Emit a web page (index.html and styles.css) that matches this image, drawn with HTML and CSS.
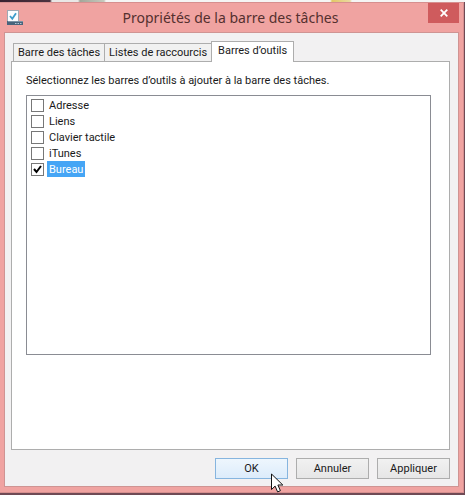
FILE: index.html
```html
<!DOCTYPE html>
<html lang="fr">

<head>
    <meta charset="UTF-8">
    <meta name="viewport" content="width=device-width, initial-scale=1.0">
    <title>Propriétés de la barre des tâches</title>
    <link rel="stylesheet" href="styles.css">
</head>

<body>

    <div class="window">
        <header class="title-bar">
            <svg class="app-icon" width="16" height="16" viewBox="0 0 16 16" aria-hidden="true">
                <rect x="0.5" y="0.5" width="11" height="11" fill="#fbfdff" stroke="#9fa9b4" />
                <path d="M3 6l2.300 2.800L9 3.200" fill="none" stroke="#3d9ccb" stroke-width="1.800" />
                <rect x="0" y="11" width="16" height="4" fill="#48647c" />
                <path d="M1 11.500h15" stroke="#7d93a5" />
                <path d="M8 13.500h1.500M10.500 13.500H12M13 13.500h1.500" stroke="#b5c8d6" />
            </svg>
            <h1>Propriétés de la barre des tâches</h1>
            <button type="button" class="close-btn" aria-label="Fermer">
                <svg width="8" height="8" viewBox="0 0 8 8" aria-hidden="true">
                    <path d="M0.700 0.700l6.600 6.600M7.300 0.700L0.700 7.300" stroke="#fff" stroke-width="1.800" />
                </svg>
            </button>
        </header>

        <form class="dialog">
            <div class="tabs" role="tablist">
                <button type="button" class="tab" role="tab" aria-selected="false">Barre des tâches</button>
                <button type="button" class="tab" role="tab" aria-selected="false">Listes de raccourcis</button>
                <button type="button" class="tab active" role="tab" aria-selected="true">Barres d’outils</button>
            </div>

            <div class="panel" role="tabpanel">
                <p id="toolbars-label">Sélectionnez les barres d’outils à ajouter à la barre des tâches.</p>
                <ul class="toolbar-list" aria-labelledby="toolbars-label">
                    <li><label><input type="checkbox"><span>Adresse</span></label></li>
                    <li><label><input type="checkbox"><span>Liens</span></label></li>
                    <li><label><input type="checkbox"><span>Clavier tactile</span></label></li>
                    <li><label><input type="checkbox"><span>iTunes</span></label></li>
                    <li><label><input type="checkbox" checked><span class="selected">Bureau</span></label></li>
                </ul>
            </div>

            <div class="actions">
                <button type="button" class="btn hovered">OK
                    <svg class="cursor" width="13" height="20" viewBox="0 0 13 20" aria-hidden="true">
                        <path d="M0.500 1v15.500l3.600-3.400 2.500 5.800 2.800-1.200-2.500-5.700h4.900z" fill="#fff" stroke="#111" />
                    </svg>
                </button>
                <button type="button" class="btn">Annuler</button>
                <button type="button" class="btn">Appliquer</button>
            </div>
        </form>
    </div>

</body>

</html>
```

FILE: styles.css
```css
* {
    box-sizing: border-box;
}

body {
    display: flex;
    height: 100vh;
    margin: 0;
    padding: 2px 1px 2px 0;
    background: linear-gradient(90deg, #3a2230 0, #4b3340 50px, #e9e7e6 52px, #e9e7e6 78px, #a3a79a 80px, #c5c9bd 104px, #f5f5f5 106px, #f5f5f5 330px, #e3c766 332px, #ead9a0 350px, #f5f5f5 352px) top / 100% 2px no-repeat, #6f4a55;
    font-family: Roboto, "Noto Sans", sans-serif;
    font-size: 11px;
    color: #1a1a1a;
}

button {
    font: inherit;
    color: inherit;
}

.window {
    flex: 1;
    display: flex;
    flex-direction: column;
    padding: 0 4px 5px;
    background-color: #f0a3a1;
    border: 1px solid #d68f8f;
    border-left: none;
}

.title-bar {
    display: flex;
    align-items: flex-start;
    height: 29px;
}

.app-icon {
    margin: 7px 0 0 3px;
}

.title-bar h1 {
    flex: 1;
    margin: 4px 0 0 10px;
    font-family: "Noto Sans", "Open Sans", sans-serif;
    font-size: 14px;
    font-weight: normal;
    line-height: 22px;
    text-align: center;
    color: #54302f;
}

.close-btn {
    display: flex;
    align-items: center;
    justify-content: center;
    width: 31px;
    height: 20px;
    padding: 0;
    background-color: #cf5b5d;
    border: none;
}

.dialog {
    flex: 1;
    display: flex;
    flex-direction: column;
    padding: 8px 8px 7px 6px;
    background-color: #f2f1f2;
    border: 1px solid #cf9493;
}

.tabs {
    display: flex;
    align-items: flex-end;
    padding-left: 2px;
}

.tab {
    height: 18px;
    margin-right: -1px;
    padding: 0 4px;
    line-height: 18px;
    background-color: #f1f1f1;
    border: 1px solid #adadad;
    border-bottom: none;
}

.tab.active {
    position: relative;
    height: 21px;
    margin-bottom: -1px;
    padding: 0 6px 2px;
    background-color: #fff;
}

.panel {
    flex: 1;
    display: flex;
    flex-direction: column;
    padding: 10px 18px 94px 14px;
    background-color: #fff;
    border: 1px solid #adadad;
}

.panel p {
    margin: 0 0 5px;
    line-height: 18px;
}

.toolbar-list {
    flex: 1;
    margin: 0;
    padding: 1px 4px;
    list-style: none;
    border: 1px solid #8a8c93;
}

.toolbar-list label {
    display: flex;
    align-items: center;
    width: max-content;
    height: 16px;
}

.toolbar-list input {
    appearance: none;
    width: 13px;
    height: 13px;
    margin: 0 3px 0 0;
    background-color: #fff;
    border: 1px solid #777;
}

.toolbar-list input:checked {
    background: url("data:image/svg+xml,%3Csvg xmlns='http://www.w3.org/2000/svg' viewBox='0 0 11 11'%3E%3Cpath d='M2 5l2.500 3L9 2' fill='none' stroke='%23000' stroke-width='2'/%3E%3C/svg%3E") center no-repeat #fff;
}

.toolbar-list span {
    padding: 1px 2px 0;
    line-height: 15px;
}

.toolbar-list .selected {
    background-color: #45a5f5;
    color: #fff;
}

.actions {
    display: flex;
    justify-content: flex-end;
    gap: 8px;
    margin: 8px 0 0;
}

.btn {
    position: relative;
    width: 73px;
    height: 21px;
    padding: 0;
    line-height: 19px;
    background: linear-gradient(#f1f1f1, #e6e6e6);
    border: 1px solid #adadad;
}

.btn.hovered {
    background: linear-gradient(#eef6fd, #dcecfb);
    border-color: #86b5df;
}

/* pointer resting on the OK button */
.cursor {
    position: absolute;
    top: 14px;
    left: 55px;
    pointer-events: none;
}
```
